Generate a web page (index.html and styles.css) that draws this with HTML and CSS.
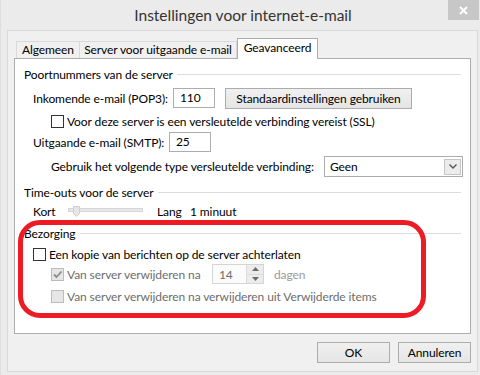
FILE: index.html
```html
<!DOCTYPE html>
<html lang="nl">
<head>
    <meta charset="UTF-8">
    <title>Instellingen voor internet-e-mail</title>
    <link rel="stylesheet" href="styles.css">
</head>
<body>
    <div class="window">
        <div class="titlebar">
            <div class="title">Instellingen voor internet-e-mail</div>
            <div class="close">
                <svg width="9" height="9" viewBox="0 0 9 9"><path d="M1 1L8 8M8 1L1 8" stroke="#fff" stroke-width="2"/></svg>
            </div>
        </div>
        <div class="client">
            <div class="tabs">
                <div class="tab tab-general">Algemeen</div>
                <div class="tab tab-server">Server voor uitgaande e-mail</div>
                <div class="tab tab-advanced active">Geavanceerd</div>
            </div>
            <div class="panel">
                <div class="legend legend-ports"><span>Poortnummers van de server</span><div class="rule"></div></div>
                <div class="row row-pop3">
                    <label class="lbl lbl-pop3">Inkomende e-mail (POP3):</label>
                    <div class="textbox">110</div>
                    <div class="button btn-default">Standaardinstellingen gebruiken</div>
                </div>
                <div class="row row-check row-ssl">
                    <span class="check"></span>
                    <span>Voor deze server is een versleutelde verbinding vereist (SSL)</span>
                </div>
                <div class="row row-smtp">
                    <label class="lbl lbl-smtp">Uitgaande e-mail (SMTP):</label>
                    <div class="textbox">25</div>
                </div>
                <div class="row row-crypt">
                    <label class="lbl lbl-crypt">Gebruik het volgende type versleutelde verbinding:</label>
                    <div class="select">
                        <span>Geen</span>
                        <div class="select-arrow">
                            <svg width="8" height="5" viewBox="0 0 8 5"><path d="M0.5 0.5L4 4L7.5 0.5" stroke="#555" stroke-width="1.4" fill="none"/></svg>
                        </div>
                    </div>
                </div>

                <div class="legend legend-timeout"><span>Time-outs voor de server</span><div class="rule"></div></div>
                <div class="row row-slider">
                    <span class="lbl-kort">Kort</span>
                    <svg class="slider" width="75" height="14" viewBox="0 0 75 14">
                        <rect x="0.5" y="3.5" width="74" height="3" fill="#e7e7e7" stroke="#d6d6d6"/>
                        <path d="M5.5 1.5H11.5V8.5L8.5 11.5L5.5 8.5Z" fill="#e6e6e6" stroke="#cfcfcf"/>
                    </svg>
                    <span class="lbl-lang">Lang</span>
                    <span>1 minuut</span>
                </div>

                <div class="legend legend-delivery"><span>Bezorging</span><div class="rule"></div></div>
                <div class="row row-check row-copy">
                    <span class="check"></span>
                    <span>Een kopie van berichten op de server achterlaten</span>
                </div>
                <div class="row row-remove disabled">
                    <span class="check check-disabled">
                        <svg width="11" height="11" viewBox="0 0 11 11"><path d="M2 5.5L4.5 8L9.5 2.5" stroke="#8a8a8a" stroke-width="1.8" fill="none"/></svg>
                    </span>
                    <span class="lbl-remove">Van server verwijderen na</span>
                    <div class="spin">
                        <span class="spin-value">14</span>
                        <div class="spin-buttons">
                            <div class="spin-btn"><svg width="7" height="4" viewBox="0 0 7 4"><path d="M0 4L3.5 0L7 4Z" fill="#6d6d6d"/></svg></div>
                            <div class="spin-btn"><svg width="7" height="4" viewBox="0 0 7 4"><path d="M0 0L3.5 4L7 0Z" fill="#6d6d6d"/></svg></div>
                        </div>
                    </div>
                    <span class="days">dagen</span>
                </div>
                <div class="row row-check row-trash disabled">
                    <span class="check check-disabled"></span>
                    <span>Van server verwijderen na verwijderen uit Verwijderde items</span>
                </div>

                <div class="annotation"></div>
            </div>
            <div class="footer">
                <div class="button btn-dialog">OK</div>
                <div class="button btn-dialog">Annuleren</div>
            </div>
        </div>
    </div>
</body>
</html>
```

FILE: styles.css
```css
body {
    margin: 0;
    font-family: "Segoe UI", Lato, "Open Sans", sans-serif;
    font-size: 12px;
    letter-spacing: -0.1px;
    color: #000;
    white-space: nowrap;
}

.window {
    width: 480px;
    height: 375px;
    background-color: #ebebeb;
    box-sizing: border-box;
    border-left: 1px solid #dedede;
    overflow: hidden;
}

.titlebar {
    display: flex;
    height: 30px;
}
.title {
    flex: 1;
    padding-left: 37px;
    text-align: center;
    font-size: 15.5px;
    letter-spacing: 0;
    line-height: 30px;
    color: #333;
}
.close {
    width: 31px;
    height: 20px;
    margin-right: 1px;
    background-color: #c7c7c7;
    display: flex;
    align-items: center;
    justify-content: center;
}

.client {
    margin-left: 6px;
    width: 471px;
    height: 342px;
    box-sizing: border-box;
    border: 1px solid #d9d9d9;
    background-color: #f0f0f0;
}

/* tabs */
.tabs {
    display: flex;
    align-items: flex-end;
    height: 20px;
    margin-top: 7px;
    margin-left: 6px;
    padding-left: 2px;
}
.tab {
    height: 17px;
    box-sizing: border-box;
    border: 1px solid #d9d9d9;
    border-bottom: none;
    border-right: none;
    background-color: #f0f0f0;
    text-align: center;
    line-height: 16px;
}
.tab-general { width: 63px; }
.tab-server { width: 158px; border-right: 1px solid #d9d9d9; }
.tab-advanced { width: 81px; }
.tab.active {
    height: 21px;
    margin-bottom: -1px;
    border: 1px solid #acacac;
    border-bottom: none;
    background-color: #fff;
    line-height: 17px;
    position: relative;
    z-index: 1;
}

.panel {
    position: relative;
    margin: 0 6px;
    height: 276px;
    box-sizing: border-box;
    border: 1px solid #acacac;
    background-color: #fff;
    padding: 0 9px;
    display: flex;
    flex-direction: column;
}

.legend {
    display: flex;
    align-items: center;
    height: 16px;
}
.legend .rule {
    flex: 1;
    height: 1px;
    margin-left: 4px;
    background-color: #dcdcdc;
}
.legend-ports { margin-top: 7px; }
.legend-timeout { margin-top: 7px; }
.legend-delivery { margin-top: 6px; }

.row {
    display: flex;
    align-items: center;
    padding-left: 9px;
}
.row > * { flex-shrink: 0; }
.row-pop3 { margin-top: 6px; height: 20px; }
.row-ssl { margin-top: 7px; height: 13px; padding-left: 27px; }
.row-smtp { margin-top: 4px; height: 20px; }
.row-crypt { margin-top: 4px; height: 21px; padding-left: 27px; }
.row-slider { margin-top: 3px; height: 16px; }
.row-copy { margin-top: 7px; height: 13px; }
.row-remove { margin-top: 3px; height: 20px; padding-left: 27px; }
.row-trash { margin-top: 6px; height: 13px; padding-left: 27px; }

.lbl-pop3 { width: 140px; }
.lbl-smtp { width: 136px; }
.lbl-crypt { width: 273px; }

.textbox {
    width: 42px;
    height: 20px;
    box-sizing: border-box;
    border: 1px solid #abadb3;
    padding-left: 6px;
    line-height: 18px;
}

.button {
    height: 21px;
    box-sizing: border-box;
    border: 1px solid #acacac;
    background: linear-gradient(#f0f0f0, #e5e5e5);
    text-align: center;
    line-height: 19px;
}
.btn-default {
    width: 187px;
    margin-left: 10px;
}

.check {
    width: 13px;
    height: 13px;
    box-sizing: border-box;
    border: 1px solid #333;
    background-color: #fff;
    margin-right: 3px;
    display: flex;
    align-items: center;
    justify-content: center;
}
.check-disabled {
    border-color: #bcbcbc;
    background-color: #e6e6e6;
}

.select {
    width: 139px;
    height: 21px;
    box-sizing: border-box;
    border: 1px solid #acacac;
    display: flex;
    align-items: center;
    padding-left: 5px;
}
.select span { flex: 1; }
.select-arrow {
    width: 17px;
    height: 16px;
    margin-right: 1px;
    box-sizing: border-box;
    border: 1px solid #c5c5c5;
    background-color: #ececec;
    display: flex;
    align-items: center;
    justify-content: center;
}

.lbl-kort { width: 35px; }
.slider { margin-top: 1px; }
.lbl-lang { width: 33px; margin-left: 14px; }

.disabled { color: #6d6d6d; }
.lbl-remove { width: 145px; }
.spin {
    width: 52px;
    height: 20px;
    box-sizing: border-box;
    border: 1px solid #d5d5d5;
    background-color: #fbfbfb;
    display: flex;
}
.spin-value {
    flex: 1;
    padding-left: 6px;
    line-height: 20px;
}
.spin-buttons {
    width: 16px;
    display: flex;
    flex-direction: column;
    border-left: 1px solid #dcdcdc;
}
.spin-btn {
    flex: 1;
    background-color: #ececec;
    display: flex;
    align-items: center;
    justify-content: center;
}
.spin-btn + .spin-btn { border-top: 1px solid #dcdcdc; }
.days {
    margin-left: 10px;
    color: #9a9a9a;
}

.annotation {
    position: absolute;
    left: 3px;
    top: 161px;
    width: 408px;
    height: 98px;
    box-sizing: border-box;
    border: 5px solid #ed1c24;
    border-radius: 22px;
}

.footer {
    display: flex;
    justify-content: flex-end;
    gap: 8px;
    margin-top: 8px;
    margin-right: 6px;
}
.btn-dialog { width: 73px; }
```
